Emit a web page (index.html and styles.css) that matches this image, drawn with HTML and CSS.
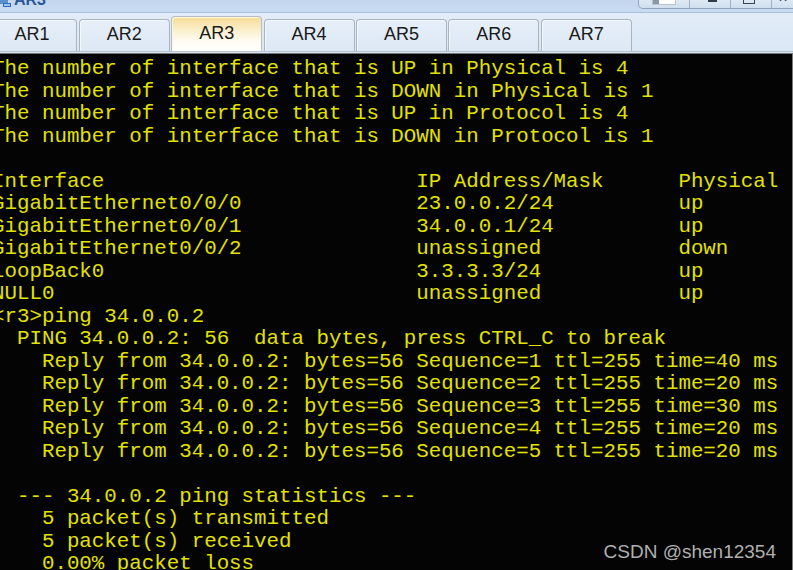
FILE: index.html
```html
<!DOCTYPE html>
<html>
<head>
<meta charset="utf-8">
<link rel="stylesheet" href="styles.css">
</head>
<body>
<div class="window">
  <div class="titlebar">
    <svg class="app-icon" width="11" height="7" viewBox="0 0 11 7">
      <rect x="0" y="0" width="8" height="4" fill="#5b8fd0"/>
      <rect x="3" y="3" width="8" height="4" fill="#2f6cc0"/>
      <rect x="4" y="4" width="6" height="2" fill="#9cc3ee"/>
    </svg>
    <span class="title">AR3</span>
    <div class="controls">
      <div class="ctl ctl-first"><span class="ico-tile"></span></div>
      <div class="ctl"><span class="ico-min"></span></div>
      <div class="ctl"><span class="ico-max"></span></div>
      <div class="ctl"><span class="ico-close">✕</span></div>
    </div>
  </div>
  <div class="tabbar">
    <div class="tab">AR1</div>
    <div class="tab">AR2</div>
    <div class="tab active">AR3</div>
    <div class="tab">AR4</div>
    <div class="tab">AR5</div>
    <div class="tab">AR6</div>
    <div class="tab">AR7</div>
  </div>
  <div class="tabbar-edge"></div>
  <div class="terminal">
<pre class="screen">The number of interface that is UP in Physical is 4
The number of interface that is DOWN in Physical is 1
The number of interface that is UP in Protocol is 4
The number of interface that is DOWN in Protocol is 1

Interface                         IP Address/Mask      Physical   Protocol
GigabitEthernet0/0/0              23.0.0.2/24          up         up
GigabitEthernet0/0/1              34.0.0.1/24          up         up
GigabitEthernet0/0/2              unassigned           down       down
LoopBack0                         3.3.3.3/24           up         up(s)
NULL0                             unassigned           up         up(s)
&lt;r3&gt;ping 34.0.0.2
  PING 34.0.0.2: 56  data bytes, press CTRL_C to break
    Reply from 34.0.0.2: bytes=56 Sequence=1 ttl=255 time=40 ms
    Reply from 34.0.0.2: bytes=56 Sequence=2 ttl=255 time=20 ms
    Reply from 34.0.0.2: bytes=56 Sequence=3 ttl=255 time=30 ms
    Reply from 34.0.0.2: bytes=56 Sequence=4 ttl=255 time=20 ms
    Reply from 34.0.0.2: bytes=56 Sequence=5 ttl=255 time=20 ms

  --- 34.0.0.2 ping statistics ---
    5 packet(s) transmitted
    5 packet(s) received
    0.00% packet loss
    round-trip min/avg/max = 20/26/40 ms</pre>
    <div class="watermark">CSDN @shen12354</div>
  </div>
</div>
</body>
</html>
```

FILE: styles.css
```css
html, body {
  margin: 0;
  padding: 0;
  width: 793px;
  height: 570px;
  overflow: hidden;
  background: #000;
}

.window {
  width: 793px;
  height: 570px;
  display: flex;
  flex-direction: column;
  overflow: hidden;
}

.titlebar {
  height: 12px;
  flex: none;
  display: flex;
  align-items: flex-start;
  background: linear-gradient(#c3d6ee, #c9dbf0);
  border-bottom: 1px solid #aabfd9;
  overflow: hidden;
  position: relative;
}

.app-icon {
  flex: none;
  margin-top: 0;
}

.title {
  font-family: "Liberation Sans", Arial, sans-serif;
  font-weight: bold;
  font-size: 16px;
  line-height: 16px;
  color: #2a5896;
  margin-top: -8px;
  margin-left: 3px;
}

.controls {
  margin-left: auto;
  margin-right: -20px;
  display: flex;
  height: 8px;
  border: 1px solid #8fa3bd;
  border-top: none;
  border-radius: 0 0 5px 5px;
  background: linear-gradient(#dfe9f5, #cfdded);
  overflow: hidden;
}

.ctl {
  width: 40px;
  border-left: 1px solid #9fb1c8;
  position: relative;
}

.ctl-first {
  width: 50px;
  border-left: none;
}

.ico-tile {
  position: absolute;
  left: 13px;
  top: -3px;
  width: 22px;
  height: 6px;
  background: linear-gradient(90deg, #8a97a8 0 6px, #ffffff 6px);
  border: 1px solid #b9c3cf;
}

.ico-min {
  position: absolute;
  left: 18px;
  top: 0;
  width: 9px;
  height: 2px;
  background: #303a48;
}

.ico-max {
  position: absolute;
  left: 12px;
  top: -4px;
  width: 10px;
  height: 6px;
  border: 1px solid #3a4452;
}

.ico-close {
  position: absolute;
  left: 6px;
  top: -9px;
  font-family: "DejaVu Sans", sans-serif;
  font-size: 12px;
  color: #303a48;
}

.tabbar {
  height: 38px;
  flex: none;
  display: flex;
  align-items: flex-end;
  gap: 1.4px;
  background: linear-gradient(#e2ecf8, #dae7f5);
  overflow: hidden;
}

.tab {
  flex: none;
  width: 89px;
  height: 29px;
  padding-bottom: 2px;
  display: flex;
  align-items: center;
  justify-content: center;
  font-family: "Liberation Sans", Arial, sans-serif;
  font-size: 18px;
  color: #1a1a1a;
  border: 1px solid #a9b4c1;
  border-bottom: none;
  border-radius: 4px 4px 0 0;
  background: linear-gradient(#e6eff9, #dde8f5);
  box-shadow: inset 1px 1px 0 #f4f8fd;
}

.tab:first-child {
  margin-left: -13.6px;
}

.tab.active {
  height: 33px;
  padding-bottom: 1px;
  background: linear-gradient(#f5dc96 0%, #fbeec6 35%, #fefbf1 70%, #ffffff 100%);
  border-color: #b5bcc4;
  box-shadow: inset 1px 1px 0 #fff6dc;
}

.tabbar-edge {
  height: 3px;
  flex: none;
  background: linear-gradient(#b7c2cd 0 1px, #dbe3ec 1px 2px, #6e7680 2px 3px);
}

.terminal {
  flex: 1;
  position: relative;
  background: #040404;
  border-right: 1px solid #7a7a7a;
  overflow: hidden;
}

.screen {
  margin: 0 0 0 -8px;
  padding-top: 4px;
  font-family: "Courier New", "Nimbus Mono PS", "Nimbus Mono L", "FreeMono", "Liberation Mono", monospace;
  font-size: 20.8px;
  line-height: 22.5px;
  color: #e2e200;
  white-space: pre;
}

.watermark {
  position: absolute;
  right: 16px;
  bottom: 7px;
  font-family: "Liberation Sans", Arial, sans-serif;
  font-size: 19px;
  line-height: 22px;
  color: #b0b0b0;
}
```
